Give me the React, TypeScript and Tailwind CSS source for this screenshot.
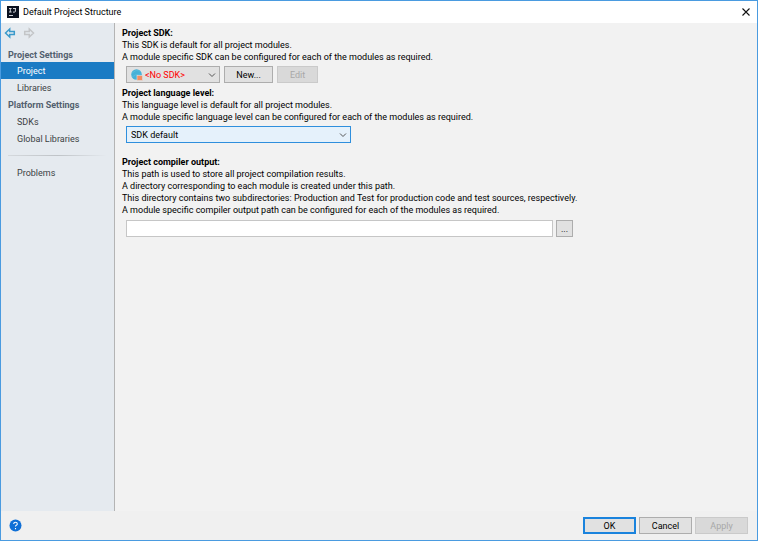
import React from "react";

const platformItems = ["SDKs", "Global Libraries"];

function Logo() {
  return (
    <svg className="h-3 w-3 shrink-0" viewBox="0 0 12 12" aria-hidden="true">
      <rect width="12" height="12" fill="#0b1220" />
      <path d="M2 2.5h2.6M3.3 2.5v3.4M2 6h2.6M6 2.5h3M8.4 2.5v2.7q0 .9-.9.9H6" stroke="#e8eaee" strokeWidth="0.9" fill="none" />
      <path d="M2 9.5h4" stroke="#e8eaee" strokeWidth="0.9" />
    </svg>
  );
}

function Arrow({ color, flip }: { color: string; flip?: boolean }) {
  return (
    <svg className="h-3 w-3" viewBox="0 0 12 12" aria-hidden="true">
      <path
        d={flip ? "M10.5 6L6.3 2v2.6H1.7v2.8h4.6V10z" : "M1.5 6l4.2-4v2.6h4.6v2.8H5.7V10z"}
        fill="none"
        stroke={color}
        strokeWidth="1.5"
      />
    </svg>
  );
}

function Chevron() {
  return (
    <svg className="pointer-events-none absolute top-1/2 right-1 h-2 w-2 -translate-y-1/2" viewBox="0 0 8 8" aria-hidden="true">
      <path d="M1 2.5l3 3 3-3" fill="none" stroke="#555" strokeWidth="1" />
    </svg>
  );
}

function NavItem({ label, active }: { label: string; active?: boolean }) {
  return (
    <a
      href="#"
      className={
        active
          ? "flex h-[17px] items-center bg-[#1a7bc4] pl-4 text-white"
          : "flex h-[17px] items-center pl-4 text-[#3c3f43]"
      }
    >
      {label}
    </a>
  );
}

export default function App() {
  return (
    <div className="flex min-h-screen flex-col border border-[#4a9be0] bg-[#f0f0f0] font-['Roboto','Open_Sans',sans-serif] text-[9px] leading-3 text-black">
      <header className="flex h-[22px] items-center bg-white pr-[5px] pl-[6px]">
        <Logo />
        <h1 className="ml-1 flex-1 text-[9px]">Default Project Structure</h1>
        <button aria-label="Close" className="flex h-4 w-3 items-center justify-center">
          <svg className="h-2 w-2" viewBox="0 0 8 8">
            <path d="M0.5 0.5l7 7M7.5 0.5l-7 7" stroke="#111" strokeWidth="1.1" />
          </svg>
        </button>
      </header>

      <div className="flex flex-1">
        <aside className="w-[114px] shrink-0 border-r border-[#b4b4b4] bg-[#e5eaef]">
          <div className="flex h-5 items-center gap-[7px] pl-[3px]">
            <button aria-label="Back">
              <Arrow color="#3b9acb" />
            </button>
            <button aria-label="Forward">
              <Arrow color="#c3c5c7" flip />
            </button>
          </div>
          <nav>
            <h2 className="flex h-[19px] items-end pb-px pl-[7px] font-bold text-[#52606e]">Project Settings</h2>
            <NavItem label="Project" active />
            <NavItem label="Libraries" />
            <h2 className="flex h-[17px] items-center pl-[7px] font-bold text-[#52606e]">Platform Settings</h2>
            {platformItems.map((item) => (
              <NavItem key={item} label={item} />
            ))}
            <div className="mx-[7px] my-2 h-px bg-linear-to-r from-[#d5d9dd] via-[#bfc3c7] to-[#e5eaef]" />
            <NavItem label="Problems" />
          </nav>
        </aside>

        <main className="flex-1 bg-[#f2f2f2] pt-1 pl-[7px]">
          <section>
            <h2 className="font-bold">Project SDK:</h2>
            <p>This SDK is default for all project modules.</p>
            <p>A module specific SDK can be configured for each of the modules as required.</p>
            <div className="mt-[3px] flex h-[17px] gap-1 pl-1">
              <div className="relative w-[94px]">
                <svg className="pointer-events-none absolute top-[3px] left-[5px] h-3 w-3" viewBox="0 0 12 12" aria-hidden="true">
                  <circle cx="5.5" cy="5.5" r="5.3" fill="#45b1d8" />
                  <path d="M1 4q4-4 8-2M1 8q3-3 9-3" stroke="#5cbcdd" strokeWidth="0.8" fill="none" />
                  <rect x="6" y="6.5" width="5.5" height="5" fill="#f28e62" stroke="#e1e1e1" strokeWidth="0.6" />
                </svg>
                <select aria-label="Project SDK" className="h-[17px] w-full appearance-none border border-[#adadad] bg-[#e1e1e1] pl-[18px] text-[9px] text-[#ff0000]">
                  <option>&lt;No SDK&gt;</option>
                </select>
                <Chevron />
              </div>
              <button className="w-[49px] border border-[#adadad] bg-[#e1e1e1]">New...</button>
              <button disabled className="w-[41px] border border-[#cacaca] bg-[#d9d9d9] text-[#a8a8a8]">Edit</button>
            </div>
          </section>

          <section className="mt-1">
            <h2 className="font-bold">Project language level:</h2>
            <p>This language level is default for all project modules.</p>
            <p>A module specific language level can be configured for each of the modules as required.</p>
            <div className="relative mt-[3px] ml-1 h-[17px] w-[225px]">
              <select aria-label="Project language level" className="h-[17px] w-full appearance-none border border-[#2f8fdd] bg-[#e5f1fb] pl-1 text-[9px]">
                <option>SDK default</option>
              </select>
              <Chevron />
            </div>
          </section>

          <section className="mt-[13px]">
            <h2 className="font-bold">Project compiler output:</h2>
            <p>This path is used to store all project compilation results.</p>
            <p>A directory corresponding to each module is created under this path.</p>
            <p>This directory contains two subdirectories: Production and Test for production code and test sources, respectively.</p>
            <p>A module specific compiler output path can be configured for each of the modules as required.</p>
            <div className="mt-1 flex h-[17px] gap-[3px] pl-1">
              <input aria-label="Project compiler output" className="w-[427px] border border-[#c6c6c6] bg-white px-1" />
              <button aria-label="Browse" className="w-[17px] border border-[#adadad] bg-[#e1e1e1]">...</button>
            </div>
          </section>
        </main>
      </div>

      <footer className="flex h-[29px] items-center gap-[3px] pr-[9px] pl-2">
        <button aria-label="Help" className="mr-auto">
          <svg className="h-[13px] w-[13px]" viewBox="0 0 13 13">
            <circle cx="6.5" cy="6.5" r="6" fill="#0f6fd6" />
            <path d="M4.7 5q0-1.8 1.8-1.8T8.3 4.9q0 .9-1 1.4-.8.4-.8 1.3M6.5 9v1.2" fill="none" stroke="#fff" strokeWidth="1.1" />
          </svg>
        </button>
        <button className="h-[17px] w-[53px] border-2 border-[#1a83dd] bg-[#e1e1e1]">OK</button>
        <button className="h-[17px] w-[53px] border border-[#adadad] bg-[#e1e1e1]">Cancel</button>
        <button disabled className="h-[17px] w-[53px] border border-[#cacaca] bg-[#d9d9d9] text-[#a8a8a8]">Apply</button>
      </footer>
    </div>
  );
}
